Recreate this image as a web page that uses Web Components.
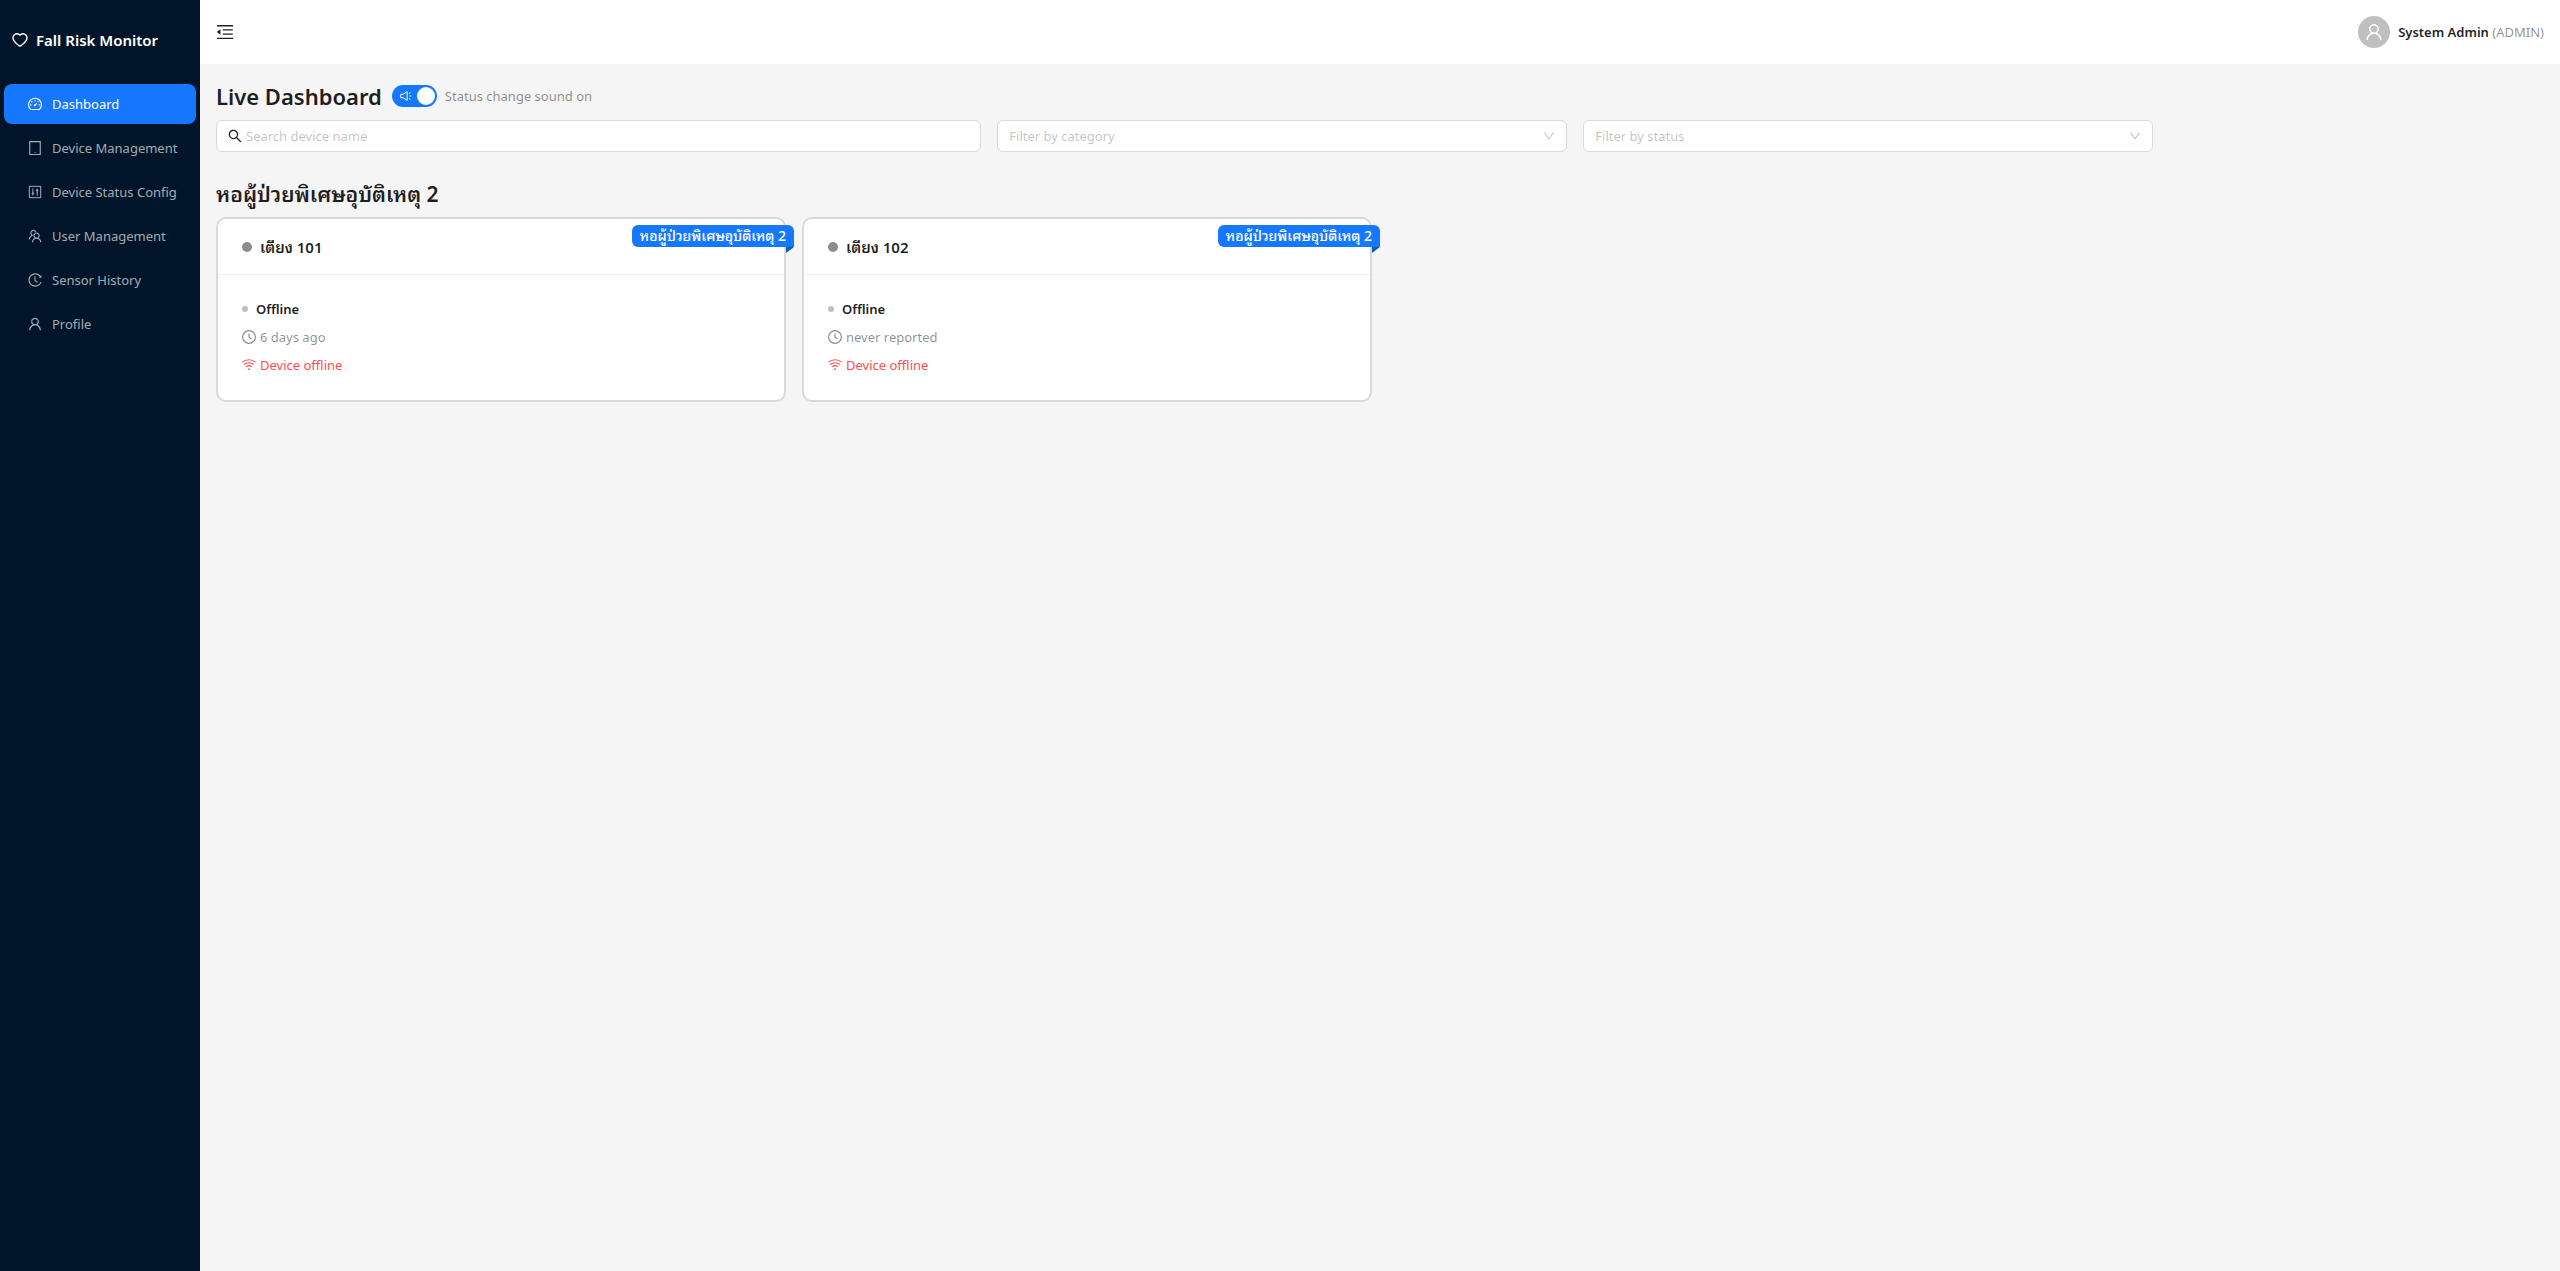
<!DOCTYPE html>
<html lang="en">
<head>
<meta charset="utf-8">
<meta name="viewport" content="width=device-width, initial-scale=1">
<title>Fall Risk Monitor</title>
<style>
    :root {
        --primary: #1677ff;
        --primary-dark: #1059bf;
        --navy: #001529;
        --text: rgba(0, 0, 0, 0.88);
        --muted: rgba(0, 0, 0, 0.45);
        --placeholder: rgba(0, 0, 0, 0.25);
        --border: #d9d9d9;
        --danger: #ff4d4f;
    }
    body {
        margin: 0;
        background: #f5f5f5;
        color: var(--text);
        font: 13px/20px "Noto Sans", "Open Sans", "Noto Sans Thai Looped", Loma, "Noto Sans Thai", sans-serif;
    }
</style>
</head>
<body>
<fall-app>
    <side-nav slot="nav">
        <nav-item icon="dashboard" active>Dashboard</nav-item>
        <nav-item icon="tablet">Device Management</nav-item>
        <nav-item icon="control">Device Status Config</nav-item>
        <nav-item icon="team">User Management</nav-item>
        <nav-item icon="history">Sensor History</nav-item>
        <nav-item icon="user">Profile</nav-item>
    </side-nav>
    <top-bar slot="header" name="System Admin" role-name="ADMIN"></top-bar>
    <dashboard-toolbar></dashboard-toolbar>
    <device-group heading="หอผู้ป่วยพิเศษอุบัติเหตุ 2">
        <device-card name="เตียง 101" ribbon="หอผู้ป่วยพิเศษอุบัติเหตุ 2" seen="6 days ago"></device-card>
        <device-card name="เตียง 102" ribbon="หอผู้ป่วยพิเศษอุบัติเหตุ 2" seen="never reported"></device-card>
    </device-group>
</fall-app>

<script>
const ICONS = {
    heart: '<path d="M923 283.6a260.04 260.04 0 00-56.9-82.8 264.4 264.4 0 00-84-55.5A265.34 265.34 0 00679.7 125c-49.3 0-97.4 13.5-139.2 39-10 6.1-19.5 12.8-28.5 20.1-9-7.3-18.5-14-28.5-20.1-41.8-25.5-89.9-39-139.2-39-35.5 0-69.9 6.8-102.4 20.3-31.4 13-59.7 31.7-84 55.5a258.44 258.44 0 00-56.9 82.8c-13.9 32.3-21 66.6-21 101.9 0 33.3 6.8 68 20.3 103.3 11.3 29.5 27.5 60.1 48.2 91 32.8 48.9 77.9 99.9 133.9 151.6 92.8 85.7 184.7 144.9 188.6 147.3l23.7 15.2c10.5 6.7 24 6.7 34.5 0l23.7-15.2c3.9-2.5 95.7-61.6 188.6-147.3 56-51.7 101.1-102.7 133.9-151.6 20.7-30.9 37-61.5 48.2-91 13.5-35.3 20.3-70 20.3-103.3.1-35.3-7-69.6-20.9-101.9zM512 814.8S156 586.7 156 385.5C156 283.6 240.3 201 344.3 201c73.1 0 136.5 40.8 167.7 100.4C543.2 241.8 606.6 201 679.7 201c104 0 188.3 82.6 188.3 184.5 0 201.2-356 429.3-356 429.3z"/>',
    user: '<path d="M858.5 763.6a374 374 0 00-80.6-119.5 375.63 375.63 0 00-119.5-80.6c-.4-.2-.8-.3-1.2-.5C719.5 518 760 444.7 760 362c0-137-111-248-248-248S264 225 264 362c0 82.7 40.5 156 102.8 201.1-.4.2-.8.3-1.2.5-44.8 18.9-85 46-119.5 80.6a375.63 375.63 0 00-80.6 119.5A371.7 371.7 0 00136 901.8a8 8 0 008 8.2h60c4.4 0 7.9-3.5 8-7.8 2-77.2 33-149.5 87.8-204.3 56.7-56.7 132-87.9 212.2-87.9s155.5 31.2 212.2 87.9C779 752.7 810 825 812 902.2c.1 4.4 3.6 7.8 8 7.8h60a8 8 0 008-8.2c-1-47.8-10.9-94.3-29.5-138.2zM512 534c-45.9 0-89.1-17.9-121.6-50.4S340 407.9 340 362c0-45.9 17.9-89.1 50.4-121.6S466.1 190 512 190s89.1 17.9 121.6 50.4S684 316.1 684 362c0 45.9-17.9 89.1-50.4 121.6S557.9 534 512 534z"/>',
    fold: '<path d="M408 442h480c4.4 0 8-3.6 8-8v-56c0-4.4-3.6-8-8-8H408c-4.4 0-8 3.6-8 8v56c0 4.4 3.6 8 8 8zm-8 204c0 4.4 3.6 8 8 8h480c4.4 0 8-3.6 8-8v-56c0-4.4-3.6-8-8-8H408c-4.4 0-8 3.6-8 8v56zm504-486H120c-4.4 0-8 3.6-8 8v56c0 4.4 3.6 8 8 8h784c4.4 0 8-3.6 8-8v-56c0-4.4-3.6-8-8-8zm0 632H120c-4.4 0-8 3.6-8 8v56c0 4.4 3.6 8 8 8h784c4.4 0 8-3.6 8-8v-56c0-4.4-3.6-8-8-8zM115.4 518.9L271.7 642c5.8 4.6 14.4.5 14.4-6.9V388.9c0-7.4-8.5-11.5-14.4-6.9L115.4 505.1a8.74 8.74 0 000 13.8z"/>',
    search: '<path d="M909.6 854.5L649.9 594.8C690.2 542.7 712 479 712 412c0-80.2-31.3-155.4-87.9-212.1-56.6-56.7-132-87.9-212.1-87.9s-155.5 31.3-212.1 87.9C143.2 256.5 112 331.8 112 412c0 80.1 31.3 155.5 87.9 212.1C256.5 680.8 331.8 712 412 712c67 0 130.6-21.8 182.7-62l259.7 259.6a8.2 8.2 0 0011.6 0l43.6-43.5a8.2 8.2 0 000-11.6zM570.4 570.4C528 612.7 471.8 636 412 636s-116-23.3-158.4-65.6C211.3 528 188 471.8 188 412s23.3-116.1 65.6-158.4C296 211.3 352.2 188 412 188s116.1 23.2 158.4 65.6S636 352.2 636 412s-23.3 116.1-65.6 158.4z"/>',
    down: '<path d="M884 256h-75c-5.1 0-9.9 2.5-12.9 6.6L512 654.2 227.9 262.6c-3-4.1-7.8-6.6-12.9-6.6h-75c-6.5 0-10.3 7.4-6.5 12.7l352.6 486.1c12.8 17.6 39 17.6 51.7 0l352.6-486.1c3.9-5.3.1-12.7-6.4-12.7z"/>',
    dashboard: '<g fill="none" stroke="currentColor" stroke-width="72"><path d="M236 860a410 410 0 11552 0zM512 250v80M285 345l55 55M200 570h80M744 570h80M686 396l54-54"/><path d="M512 580l110-110"/><circle cx="500" cy="592" r="30"/></g>',
    tablet: '<path fill="none" stroke="currentColor" stroke-width="72" d="M176 100h672v824H176z"/><circle cx="512" cy="784" r="40"/>',
    control: '<g fill="none" stroke="currentColor" stroke-width="64"><path d="M148 148h728v728H148zM376 290v250M376 650v90M648 290v90M648 490v250"/><circle cx="376" cy="600" r="48"/><circle cx="648" cy="420" r="48"/></g>',
    team: '<path d="M824.2 699.9a301.55 301.55 0 00-86.4-60.4C783.1 602.8 812 546.8 812 484c0-110.8-92.4-201.7-203.2-200-109.1 1.7-197 90.6-197 200 0 62.8 29 118.8 74.2 155.5a300.95 300.95 0 00-86.4 60.4C345 754.6 314 826.8 312 903.8a8 8 0 008 8.2h56c4.3 0 7.9-3.4 8-7.7 1.9-58 25.4-112.3 66.7-153.5A226.62 226.62 0 01612 684c60.9 0 118.2 23.7 161.3 66.8C814.6 792 838 846.3 840 904.3c.1 4.3 3.7 7.7 8 7.7h56a8 8 0 008-8.2c-2-77-33-149.2-87.8-203.9zM612 612c-34.2 0-66.4-13.3-90.5-37.5a126.86 126.86 0 01-37.5-91.8c.3-32.8 13.4-64.5 36.3-88 24-24.6 56.1-38.3 90.4-38.7 33.9-.3 66.8 12.9 91 36.6 24.8 24.3 38.4 56.8 38.4 91.4 0 34.2-13.3 66.3-37.5 90.5A127.3 127.3 0 01612 612zM361.5 510.4c-.9-8.7-1.4-17.5-1.4-26.4 0-15.9 1.5-31.4 4.3-46.5.7-3.6-1.2-7.3-4.5-8.8-13.6-6.1-26.1-14.5-36.9-25.1a127.54 127.54 0 01-38.7-95.4c.9-32.1 13.8-62.6 36.3-85.6 24.7-25.3 57.9-39.1 93.2-38.7 31.9.3 62.7 12.6 86 34.4 7.9 7.4 14.7 15.6 20.4 24.4 2 3.1 5.9 4.4 9.3 3.2 17.6-6.1 36.2-10.4 55.3-12.4 5.6-.6 8.8-6.6 6.3-11.6-32.5-64.3-98.9-108.7-175.7-109.9-110.9-1.7-203.3 89.2-203.3 199.9 0 62.8 28.9 118.8 74.2 155.5-31.8 14.7-61.1 35-86.5 60.4-54.8 54.7-85.8 126.9-87.8 204a8 8 0 008 8.2h56.1c4.3 0 7.9-3.4 8-7.7 1.9-58 25.4-112.3 66.7-153.5 29.4-29.4 65.4-49.8 104.7-59.7 3.9-1 6.5-4.7 6-8.7z"/>',
    history: '<path d="M536.1 273H488c-4.4 0-8 3.6-8 8v275.3c0 2.6 1.2 5 3.3 6.5l165.3 120.7c3.6 2.6 8.6 1.9 11.2-1.7l28.6-39c2.7-3.7 1.9-8.7-1.7-11.2L544.1 528.5V281c0-4.4-3.6-8-8-8zm219.8 75.2l156.8 38.3c5 1.2 9.9-2.6 9.9-7.7l.8-161.5c0-6.7-7.7-10.5-12.9-6.3L752.9 334.1a8 8 0 003 14.1zm167.7 301.1l-56.7-19.5a8 8 0 00-10.1 4.8c-1.9 5.1-3.9 10.1-6 15.1-17.8 42.1-43.3 80-75.9 112.5a353 353 0 01-112.5 75.9 352.18 352.18 0 01-137.7 27.8c-47.8 0-94.1-9.3-137.7-27.8a353 353 0 01-112.5-75.9c-32.5-32.5-58-70.4-75.9-112.5A353.44 353.44 0 01171 512c0-47.8 9.3-94.2 27.8-137.8 17.8-42.1 43.3-80 75.9-112.5a353 353 0 01112.5-75.9C430.6 167.3 477 158 524.8 158s94.1 9.3 137.7 27.8A353 353 0 01775 261.7c10.2 10.3 19.8 21 28.6 32.3l59.8-46.8C784.7 146.6 662.2 81.9 524.6 82 285 82.1 92.6 276.7 95 516.4 97.4 751.9 288.9 942 524.8 942c185.5 0 343.5-117.6 403.7-282.3 1.5-4.2-.7-8.9-4.9-10.4z"/>',
    clock: '<g fill="none" stroke="currentColor" stroke-width="76"><circle cx="512" cy="512" r="410"/><path d="M512 280v250l160 116"/></g>',
    wifi: '<g fill="none" stroke="currentColor" stroke-width="68"><path d="M90 330a640 640 0 01844 0M205 480a470 470 0 01614 0M325 630a290 290 0 01374 0"/></g><circle cx="512" cy="778" r="60"/>',
    sound: '<g fill="none" stroke="currentColor" stroke-width="72"><path d="M120 380h180l300-190v644L300 644H120z"/><path d="M730 330l110-64M730 694l110 64M760 512h140"/></g>'
};

function icon(name, size = 14) {
    return `<svg width="${size}" height="${size}" viewBox="64 64 896 896" fill="currentColor" aria-hidden="true">${ICONS[name]}</svg>`;
}

class BaseElement extends HTMLElement {
    constructor() {
        super();
        this.attachShadow({ mode: 'open' });
    }

    connectedCallback() {
        this.shadowRoot.innerHTML = `
            <style>
                *, *::before, *::after { box-sizing: border-box; }
                :host { display: block; box-sizing: border-box; }
                svg { display: block; flex: none; }
                ${this.styles()}
            </style>
            ${this.content()}
        `;
    }
}

class FallApp extends BaseElement {
    styles() {
        return `
            :host { display: flex; min-height: 100vh; }
            .page { flex: 1; min-width: 0; }
            main { padding: 16px; }
        `;
    }

    content() {
        return `
            <slot name="nav"></slot>
            <div class="page">
                <slot name="header"></slot>
                <main><slot></slot></main>
            </div>
        `;
    }
}

class SideNav extends BaseElement {
    styles() {
        return `
            :host { flex: none; width: 200px; background: var(--navy); color: #fff; }
            .brand {
                display: flex;
                align-items: center;
                gap: 8px;
                height: 80px;
                padding: 0 12px;
                font-size: 15px;
                font-weight: 600;
            }
            nav { display: flex; flex-direction: column; gap: 4px; padding: 4px; }
        `;
    }

    content() {
        return `
            <div class="brand">${icon('heart', 16)}<span>Fall Risk Monitor</span></div>
            <nav><slot></slot></nav>
        `;
    }
}

class NavItem extends BaseElement {
    styles() {
        return `
            a {
                display: flex;
                align-items: center;
                gap: 10px;
                height: 40px;
                padding: 0 24px;
                border-radius: 8px;
                color: rgba(255, 255, 255, 0.65);
                text-decoration: none;
                white-space: nowrap;
            }
            :host([active]) a { background: var(--primary); color: #fff; }
        `;
    }

    content() {
        return `<a href="#">${icon(this.getAttribute('icon'))}<span><slot></slot></span></a>`;
    }
}

class TopBar extends BaseElement {
    styles() {
        return `
            :host {
                display: flex;
                align-items: center;
                justify-content: space-between;
                height: 64px;
                padding: 0 16px;
                background: #fff;
            }
            button { padding: 0; border: 0; background: none; color: inherit; cursor: pointer; }
            .user { display: flex; align-items: center; gap: 8px; }
            .avatar {
                display: grid;
                place-items: center;
                width: 32px;
                height: 32px;
                border-radius: 50%;
                background: #bfbfbf;
                color: #fff;
            }
            strong { font-weight: 600; }
            .role { color: var(--muted); }
        `;
    }

    content() {
        return `
            <button type="button" aria-label="Collapse menu">${icon('fold', 18)}</button>
            <div class="user">
                <span class="avatar">${icon('user', 18)}</span>
                <span><strong>${this.getAttribute('name')}</strong> <span class="role">(${this.getAttribute('role-name')})</span></span>
            </div>
        `;
    }
}

class SoundSwitch extends BaseElement {
    styles() {
        return `
            :host { display: flex; }
            label { display: flex; align-items: center; gap: 8px; color: var(--muted); }
            .track { display: grid; align-items: center; color: #fff; }
            .track > * { grid-area: 1 / 1; }
            .track svg { margin-left: 8px; pointer-events: none; }
            input {
                appearance: none;
                display: flex;
                justify-content: flex-end;
                width: 45px;
                height: 22px;
                margin: 0;
                padding: 2px;
                border-radius: 11px;
                background: var(--primary);
            }
            input::before {
                content: '';
                width: 18px;
                height: 18px;
                border-radius: 50%;
                background: #fff;
            }
            input:not(:checked) { justify-content: flex-start; background: var(--placeholder); }
        `;
    }

    content() {
        return `
            <label>
                <span class="track"><input type="checkbox" role="switch" checked>${icon('sound', 12)}</span>
                <span>Status change sound on</span>
            </label>
        `;
    }
}

class SearchBox extends BaseElement {
    styles() {
        return `
            label {
                display: flex;
                align-items: center;
                gap: 4px;
                height: 32px;
                padding: 0 11px;
                border: 1px solid var(--border);
                border-radius: 6px;
                background: #fff;
            }
            input {
                flex: 1;
                min-width: 0;
                padding: 0;
                border: 0;
                outline: 0;
                background: none;
                color: inherit;
                font: inherit;
            }
            input::placeholder { color: var(--placeholder); opacity: 1; }
        `;
    }

    content() {
        const text = this.getAttribute('placeholder');
        return `<label>${icon('search')}<input type="text" aria-label="${text}" placeholder="${text}"></label>`;
    }
}

class FilterSelect extends BaseElement {
    styles() {
        return `
            :host { display: grid; align-items: center; color: var(--placeholder); }
            select, svg { grid-area: 1 / 1; }
            select {
                appearance: none;
                width: 100%;
                height: 32px;
                padding: 0 11px;
                border: 1px solid var(--border);
                border-radius: 6px;
                background: #fff;
                color: inherit;
                font: inherit;
            }
            svg { justify-self: end; margin-right: 12px; pointer-events: none; }
        `;
    }

    content() {
        const text = this.getAttribute('placeholder');
        return `<select aria-label="${text}"><option>${text}</option></select>${icon('down', 12)}`;
    }
}

class DashboardToolbar extends BaseElement {
    styles() {
        return `
            .title { display: flex; align-items: center; gap: 10px; height: 32px; }
            h1 { margin: 0; font-size: 22px; line-height: 32px; font-weight: 600; }
            .filters {
                display: grid;
                grid-template-columns: repeat(24, minmax(0, 1fr));
                column-gap: 16px;
                margin-top: 8px;
            }
            search-box { grid-column: span 8; }
            filter-select { grid-column: span 6; }
        `;
    }

    content() {
        return `
            <div class="title"><h1>Live Dashboard</h1><sound-switch></sound-switch></div>
            <div class="filters">
                <search-box placeholder="Search device name"></search-box>
                <filter-select placeholder="Filter by category"></filter-select>
                <filter-select placeholder="Filter by status"></filter-select>
            </div>
        `;
    }
}

class DeviceGroup extends BaseElement {
    styles() {
        return `
            :host { margin-top: 28px; }
            h2 { margin: 0 0 9px; font-size: 21px; line-height: 28px; font-weight: 600; }
            .cards {
                display: grid;
                grid-template-columns: repeat(4, minmax(0, 1fr));
                gap: 16px;
            }
        `;
    }

    content() {
        return `
            <h2>${this.getAttribute('heading')}</h2>
            <div class="cards"><slot></slot></div>
        `;
    }
}

class DeviceCard extends BaseElement {
    styles() {
        return `
            :host { position: relative; }
            article {
                border: 2px solid var(--border);
                border-radius: 10px;
                background: #fff;
            }
            header {
                display: flex;
                align-items: center;
                gap: 8px;
                height: 56px;
                padding: 0 24px;
                border-bottom: 1px solid #f0f0f0;
            }
            header::before {
                content: '';
                width: 10px;
                height: 10px;
                border-radius: 50%;
                background: #8c8c8c;
            }
            h3 { margin: 0; font-size: 15px; line-height: 24px; font-weight: 600; }
            ul {
                display: flex;
                flex-direction: column;
                gap: 8px;
                margin: 0;
                padding: 24px 24px 25px;
                list-style: none;
            }
            li { display: flex; align-items: center; gap: 4px; }
            .status { gap: 8px; font-weight: 600; }
            .status::before {
                content: '';
                width: 6px;
                height: 6px;
                border-radius: 50%;
                background: #bfbfbf;
            }
            .seen { color: var(--muted); }
            .alert { color: var(--danger); }
            .ribbon {
                position: absolute;
                top: 8px;
                right: -8px;
                height: 22px;
                padding: 0 8px;
                border-radius: 6px 6px 0 6px;
                background: var(--primary);
                color: #fff;
                font-size: 14px;
                font-weight: 500;
                line-height: 22px;
                white-space: nowrap;
            }
            .ribbon::after {
                content: '';
                position: absolute;
                top: 100%;
                right: 0;
                border: 4px solid transparent;
                border-top-color: var(--primary-dark);
                border-left-color: var(--primary-dark);
                border-width: 3px 4px;
            }
        `;
    }

    content() {
        return `
            <article>
                <header><h3>${this.getAttribute('name')}</h3></header>
                <ul>
                    <li class="status">Offline</li>
                    <li class="seen">${icon('clock')}${this.getAttribute('seen')}</li>
                    <li class="alert">${icon('wifi')}Device offline</li>
                </ul>
            </article>
            <div class="ribbon">${this.getAttribute('ribbon')}</div>
        `;
    }
}

customElements.define('nav-item', NavItem);
customElements.define('side-nav', SideNav);
customElements.define('top-bar', TopBar);
customElements.define('sound-switch', SoundSwitch);
customElements.define('search-box', SearchBox);
customElements.define('filter-select', FilterSelect);
customElements.define('dashboard-toolbar', DashboardToolbar);
customElements.define('device-card', DeviceCard);
customElements.define('device-group', DeviceGroup);
customElements.define('fall-app', FallApp);
</script>
</body>
</html>
